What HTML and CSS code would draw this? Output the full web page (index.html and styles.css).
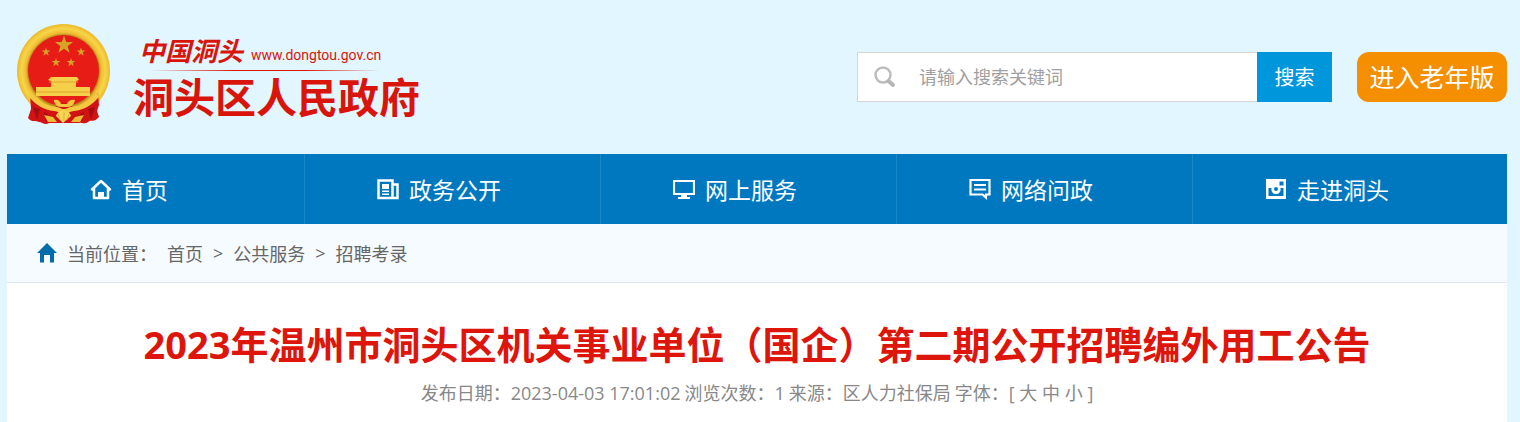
FILE: index.html
```html
<!DOCTYPE html>
<html lang="zh-CN">
<head>
<meta charset="utf-8">
<meta name="viewport" content="width=device-width, initial-scale=1">
<title>2023年温州市洞头区机关事业单位（国企）第二期公开招聘编外用工公告</title>
<link rel="stylesheet" href="styles.css">
</head>
<body>
<header class="header">
  <div class="brand">
    <svg class="emblem" viewBox="0 0 96 102" aria-hidden="true">
      <defs>
        <path id="star" d="M0-10 2.3-3.2 9.5-3.1 3.8 1.2 5.9 8.1 0 4-5.9 8.1-3.8 1.2-9.5-3.1-2.3-3.2Z"/>
        <radialGradient id="gold" cx=".5" cy=".5" r=".5">
          <stop offset=".76" stop-color="#b9861a"/>
          <stop offset=".81" stop-color="#eebb32"/>
          <stop offset=".9" stop-color="#f8d548"/>
          <stop offset="1" stop-color="#ecb92c"/>
        </radialGradient>
      </defs>
      <ellipse cx="47.500" cy="48" rx="46.500" ry="47" fill="url(#gold)"/>
      <circle cx="47.500" cy="47.500" r="35.500" fill="#e81c17"/>
      <g fill="#d6a325">
        <use href="#star" transform="translate(48 22) scale(.95)"/>
        <use href="#star" transform="translate(30 29) scale(.45)"/>
        <use href="#star" transform="translate(65 29) scale(.45)"/>
        <use href="#star" transform="translate(40 39.500) scale(.45)"/>
        <use href="#star" transform="translate(55 39.500) scale(.45)"/>
      </g>
      <path fill="#f6cf4b" d="M35 54h26l2 3-3 1v6h14v9H20v-9h15v-6l-3-1z"/>
      <path d="M33 59h29M20 69h54" stroke="#dca529" fill="none"/>
      <path fill="#d31214" d="M14 71c9 9 15 12 23 14l11-6 11 6c10-3 15-7 23-15l1 12-2 6 2 6c-5 6-8 2-11 5-4 3-7 0-9 1H33c-4 3-7-1-10-1-3-2-7 1-11-4l3-9z"/>
      <path fill="#a40d12" d="M17 84l7 2-3 11zM79 84l-7 2 3 11zM28 89l4 2-2 8zM68 89l-4 2 2 8z"/>
      <path fill="#f3c941" d="M15 69c8 10 16 14 26 15 2 0 4 2 7 2s5-2 7-2c10-1 18-5 26-15l2 5c-7 8-15 13-25 14-4 0-6 3-10 3s-6-3-10-3c-10-1-18-6-25-14z"/>
      <path fill="#f1c63f" d="M38 77c4-1 6 1 7 4h6c1-3 4-5 8-4-1 4-3 7-7 7h-7c-4 0-7-3-7-7z"/>
      <path fill="#edbd38" d="M28 92l9 2 4 5H32zM68 92l-9 2-4 5h9z"/>
      <path d="M40 93c2-7 13-7 15 0l-8 7z" fill="#f7d655"/>
      <path d="M44 97l-2-6M48 98v-9M51 97l2-6" stroke="#d69d24" stroke-width=".7"/>
    </svg>
    <div class="brand-text">
      <div class="brand-top">
        <span class="brand-script">中国洞头</span>
        <span class="brand-url">www.dongtou.gov.cn</span>
      </div>
      <div class="brand-name">洞头区人民政府</div>
    </div>
  </div>
  <div class="tools">
    <form class="search">
      <label class="search-box">
        <svg class="search-icon" viewBox="0 0 22 22" aria-hidden="true"><circle cx="9" cy="9" r="7.500" fill="none" stroke="#bdbdbd" stroke-width="2.500"/><path d="m14.500 15 4.500 4" stroke="#b5b5b5" stroke-width="4" stroke-linecap="round"/></svg>
        <input class="search-input" type="text" aria-label="搜索关键词" placeholder="请输入搜索关键词">
      </label>
      <button class="search-button" type="button">搜索</button>
    </form>
    <button class="senior" type="button">进入老年版</button>
  </div>
</header>
<main class="page">
  <nav class="nav">
    <a class="nav-item nav-home" href="#"><svg class="nav-icon" viewBox="0 0 22 22" aria-hidden="true"><path d="M2 11.500 11 3 20 11.500M4 11v9h14v-9" fill="none" stroke="#fff" stroke-width="2.500" stroke-linejoin="round" stroke-linecap="round"/><path fill="#fff" d="M8 14h6v6H8z"/></svg>首页</a>
    <a class="nav-item" href="#"><svg class="nav-icon" viewBox="0 0 22 22" aria-hidden="true"><path d="M1.500 2.500h14V20h-14zM16 6.500h4.500V20H15" fill="none" stroke="#fff" stroke-width="2.500"/><path fill="#fff" d="M5 6h7v5H5zM5 12.500h7V14H5zM5 15.500h7V17H5z"/></svg>政务公开</a>
    <a class="nav-item" href="#"><svg class="nav-icon" viewBox="0 0 22 22" aria-hidden="true"><path d="M1 3h20v13H1z" fill="none" stroke="#fff" stroke-width="2.200"/><path fill="#fff" d="M8 16.500h6v2.500h3v2H5v-2h3z"/></svg>网上服务</a>
    <a class="nav-item" href="#"><svg class="nav-icon" viewBox="0 0 22 22" aria-hidden="true"><path d="M1.500 2h19v14.500H17v3L13.500 16.500h-12z" fill="none" stroke="#fff" stroke-width="2.200"/><path d="M5 7h12M5 11.500h12" stroke="#fff" stroke-width="2"/></svg>网络问政</a>
    <a class="nav-item" href="#"><svg class="nav-icon" viewBox="0 0 22 22" aria-hidden="true"><path fill="#fff" d="M1 1h20v20H1z"/><path fill="#0078bf" d="M14.500 3.500h4v4h-4zM3.500 10h3.200a4.600 4.600 0 1 0 8.600 0h3.200v8h-15z"/><circle cx="11" cy="11" r="2" fill="#0078bf"/></svg>走进洞头</a>
  </nav>
  <nav class="crumbs" aria-label="当前位置">
    <svg class="crumb-icon" viewBox="0 0 20 20" aria-hidden="true"><path fill="#006cab" d="M10 0 20 10h-3v9.500h-4V12H7v7.500H3V10H0z"/></svg>
    <span class="crumb-label">当前位置：</span>
    <a class="crumb" href="#">首页</a><span>&gt;</span>
    <a class="crumb" href="#">公共服务</a><span>&gt;</span>
    <a class="crumb" href="#">招聘考录</a>
  </nav>
  <article class="article">
    <h1 class="title">2023年温州市洞头区机关事业单位（国企）第二期公开招聘编外用工公告</h1>
    <p class="meta">
      <span>发布日期：2023-04-03 17:01:02</span>
      <span>浏览次数：1</span>
      <span>来源：区人力社保局</span>
      <span>字体：[ <a class="size" href="#">大</a> <a class="size" href="#">中</a> <a class="size" href="#">小</a> ]</span>
    </p>
  </article>
</main>
</body>
</html>
```

FILE: styles.css
```css
* {
  box-sizing: border-box;
}

body {
  margin: 0;
  padding: 0 13px 0 7px;
  min-height: 100vh;
  display: flex;
  flex-direction: column;
  background: #e1f6fe;
  color: #666;
  font-family: "Open Sans", "Noto Sans CJK SC", sans-serif;
  font-size: 18px;
}

a {
  color: inherit;
  text-decoration: none;
}

button,
input {
  font-family: inherit;
  border: 0;
  padding: 0;
}

.header {
  display: flex;
  justify-content: space-between;
  padding: 23px 0 29px 9px;
}

.brand {
  display: flex;
  gap: 21px;
  color: #d9150b;
}

.emblem {
  width: 96px;
  height: 102px;
}

.brand-text {
  padding-top: 8px;
}

.brand-top {
  display: flex;
  align-items: flex-start;
  gap: 8px;
  height: 40px;
  padding-left: 6px;
  background: linear-gradient(90deg, transparent 6%, #d9150b 35%, #d9150b 60%, transparent 86%) bottom / 100% 1px no-repeat;
}

.brand-script {
  font-family: "Noto Sans CJK SC", sans-serif;
  font-size: 26px;
  line-height: 38px;
  font-weight: 700;
  font-style: italic;
}

.brand-url {
  padding-top: 14px;
  font-family: Roboto, sans-serif;
  font-size: 14px;
  line-height: 20px;
}

.brand-name {
  font-family: "Noto Sans CJK SC", sans-serif;
  font-size: 41px;
  line-height: 48px;
  font-weight: 700;
}

.tools {
  display: flex;
  align-items: flex-start;
  gap: 25px;
  padding-top: 29px;
}

.search {
  display: flex;
}

.search-box {
  display: flex;
  align-items: center;
  gap: 23px;
  width: 400px;
  height: 50px;
  padding-left: 16px;
  border: 1px solid #d5d5d5;
  border-right: 0;
  background: #fff;
}

.search-icon {
  width: 22px;
  height: 22px;
}

.search-input {
  flex: 1;
  min-width: 0;
  font-size: 18px;
  line-height: 28px;
  outline: 0;
}

.search-input::placeholder {
  color: #a0a0a0;
}

.search-button {
  width: 75px;
  height: 50px;
  padding-bottom: 2px;
  background: #0096db;
  color: #fff;
  font-size: 20px;
}

.senior {
  width: 150px;
  height: 50px;
  padding-bottom: 2px;
  border-radius: 12px;
  background: #f58f00;
  color: #fff;
  font-size: 25px;
}

.page {
  flex: 1;
  background: #fff;
}

.nav {
  display: grid;
  grid-template-columns: 298fr 296fr 296fr 296fr 314fr;
  background: #0078bf;
}

.nav-item {
  display: flex;
  align-items: center;
  gap: 10px;
  height: 70px;
  padding-left: 72px;
  border-right: 1px solid #1a86c6;
  color: #fff;
  font-size: 23px;
}

.nav-item:last-child {
  border-right: 0;
}

.nav-home {
  padding-left: 83px;
}

.nav-icon {
  width: 22px;
  height: 22px;
}

.crumbs {
  display: flex;
  align-items: center;
  gap: 10px;
  height: 59px;
  padding-left: 30px;
  border-bottom: 1px solid #e0e6eb;
  background: #f6fbff;
}

.crumb-icon {
  width: 20px;
  height: 20px;
}

.article {
  padding: 34px 20px 20px;
  text-align: center;
}

.title {
  margin: 0;
  color: #dd150b;
  font-size: 38px;
  line-height: 54px;
  font-weight: 700;
}

.meta {
  display: flex;
  flex-wrap: wrap;
  justify-content: center;
  gap: 4px;
  margin: 8px 0 0;
  color: #888;
  line-height: 28px;
}
```
